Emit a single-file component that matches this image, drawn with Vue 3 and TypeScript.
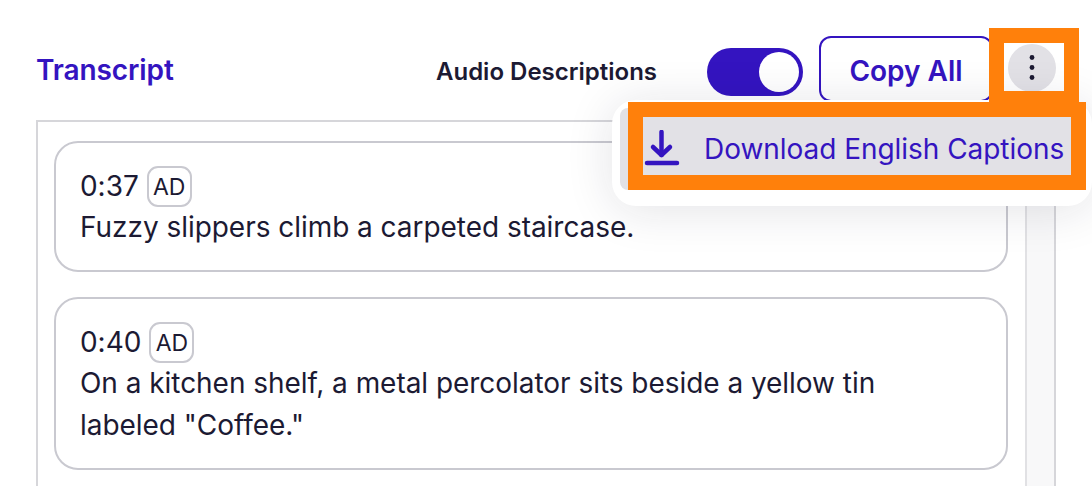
<script setup lang="ts">
interface Entry {
  time: string
  text: string
}

const entries: Entry[] = [
  { time: '0:37', text: 'Fuzzy slippers climb a carpeted staircase.' },
  { time: '0:40', text: 'On a kitchen shelf, a metal percolator sits beside a yellow tin labeled "Coffee."' },
]
</script>

<template>
  <div class="page">
    <header class="header">
      <h2 class="title">Transcript</h2>
      <span class="label">Audio Descriptions</span>
      <span class="toggle"><span class="knob"></span></span>
      <button class="copy" type="button">Copy All</button>
      <button class="kebab" type="button" aria-label="More options">
        <svg width="6" height="26" viewBox="0 0 6 26" fill="#1c1a33">
          <circle cx="3" cy="2.500" r="2.400" />
          <circle cx="3" cy="12.500" r="2.400" />
          <circle cx="3" cy="22.500" r="2.400" />
        </svg>
      </button>
    </header>

    <section class="panel">
      <div class="list">
        <article v-for="entry in entries" :key="entry.time" class="card">
          <div class="meta">
            <span class="time">{{ entry.time }}</span>
            <span class="badge">AD</span>
          </div>
          <p class="text">{{ entry.text }}</p>
        </article>
      </div>
      <div class="track"></div>
    </section>

    <div class="menu">
      <div class="menu-item">
        <svg class="dl" width="36" height="38" viewBox="0 0 36 38" fill="none" stroke="#3414c0" stroke-width="4.500" stroke-linecap="round" stroke-linejoin="round">
          <path d="M17.500 2V25" />
          <path d="M9 17L17.500 25L26 17" />
          <path d="M3 33H33" />
        </svg>
        <span class="item-label">Download English Captions</span>
      </div>
    </div>

    <div class="mark mark-kebab"></div>
    <div class="mark mark-item"></div>
  </div>
</template>

<style scoped>
.page {
  position: relative;
  box-sizing: border-box;
  width: 1092px;
  height: 486px;
  padding: 36px 36px 0;
  overflow: hidden;
  background: #fff;
  color: #1c1a33;
  font-family: Inter, "Noto Sans", sans-serif;
}

.header {
  display: flex;
  align-items: center;
  height: 66px;
  margin-bottom: 18px;
}

.title {
  flex: 1;
  margin: 2px 0 0;
  color: #3414c0;
  font-size: 28px;
  font-weight: 600;
  letter-spacing: -0.1px;
}

.label {
  margin: 5px 50px 0 0;
  font-size: 24px;
  font-weight: 600;
}

.toggle {
  box-sizing: border-box;
  display: flex;
  justify-content: flex-end;
  align-items: center;
  width: 96px;
  height: 48px;
  margin-top: 6px;
  padding: 4px;
  border-radius: 24px;
  background: #3414c0;
}

.knob {
  width: 40px;
  height: 40px;
  border-radius: 50%;
  background: #fff;
}

.copy {
  box-sizing: border-box;
  width: 174px;
  height: 66px;
  margin: 0 15px 0 16px;
  padding: 3px 0 0;
  border: 2px solid #3414c0;
  border-radius: 12px;
  background: #fff;
  color: #3414c0;
  font-family: inherit;
  font-size: 28px;
  font-weight: 600;
}

.kebab {
  display: flex;
  align-items: center;
  justify-content: center;
  width: 48px;
  height: 48px;
  margin-bottom: 2px;
  padding: 0;
  border: 0;
  border-radius: 50%;
  background: #e2e1e6;
}

.panel {
  display: flex;
  height: 400px;
  border-top: 2px solid #d6d6da;
  border-left: 2px solid #d6d6da;
  border-right: 2px solid #d6d6da;
}

.list {
  flex: 1;
  display: flex;
  flex-direction: column;
  gap: 25px;
  padding: 19px 17px 0 16px;
}

.card {
  padding: 22px 24px 22px;
  border: 2px solid #c9c9d0;
  border-radius: 24px;
  background: #fff;
  font-size: 28px;
  line-height: 42px;
  letter-spacing: -0.04px;
}

.meta {
  display: flex;
  align-items: center;
  gap: 8px;
  height: 41px;
}

.badge {
  box-sizing: border-box;
  display: flex;
  align-items: center;
  justify-content: center;
  width: 45px;
  height: 41px;
  margin-top: 2px;
  border: 2px solid #c9c9d0;
  border-radius: 11px;
  font-size: 23px;
}

.text {
  margin: 0;
  max-width: 830px;
}

.track {
  box-sizing: border-box;
  width: 29px;
  border-left: 2px solid #e1e1e4;
  background: #f8f8f9;
}

.menu {
  position: absolute;
  top: 100px;
  left: 612px;
  box-sizing: border-box;
  width: 480px;
  height: 106px;
  padding: 8px 8px 16px;
  border-radius: 24px;
  background: #fff;
  box-shadow: 0 4px 48px rgba(28, 26, 51, 0.12);
}

.menu-item {
  display: flex;
  align-items: center;
  gap: 24px;
  height: 82px;
  padding-left: 24px;
  border-radius: 8px;
  background: #e2e1e6;
  color: #3414c0;
  font-size: 28px;
}

.item-label {
  letter-spacing: -0.04px;
}

.dl {
  flex: none;
}

.mark {
  position: absolute;
  box-sizing: border-box;
  border: 15px solid #ff800b;
}

.mark-kebab {
  top: 28px;
  left: 989px;
  width: 90px;
  height: 78px;
}

.mark-item {
  top: 102px;
  left: 628px;
  width: 458px;
  height: 88px;
}
</style>

<style>
html,
body {
  margin: 0;
  background: #fff;
}
</style>
